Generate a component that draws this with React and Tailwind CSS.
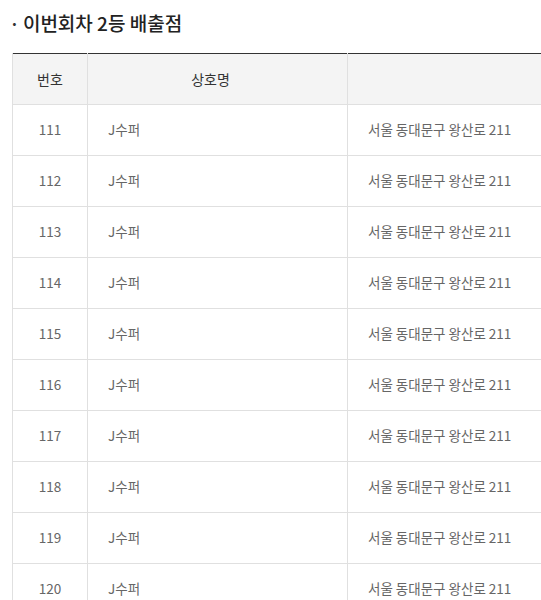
import React from 'react'

const stores = Array.from({ length: 10 }, (_, i) => ({
  no: 111 + i,
  name: 'J수퍼',
  addr: '서울 동대문구 왕산로 211',
}))

export default function App() {
  return (
    <div className="w-[541px] overflow-hidden bg-white pl-3 font-['Noto_Sans_CJK_KR','Noto_Sans',sans-serif]">
      {/* 제목 */}
      <h3 className="flex h-[53px] items-center pb-[6px] text-[19px] font-medium text-[#222]">
        <span className="ml-[-3px] mr-[3px] text-[#333]">·</span>
        이번회차 2등 배출점
      </h3>

      <table className="w-[560px] table-fixed border-collapse border-t border-t-[#333] text-[13.5px]">
        <colgroup>
          <col className="w-[75px]" />
          <col className="w-[260px]" />
          <col />
        </colgroup>
        <thead>
          <tr className="h-[51px] bg-[#f4f4f4] text-[14px] text-[#333]">
            <th className="border border-t-0 border-[#e0e0e0] font-normal">번호</th>
            <th className="border border-t-0 border-[#e0e0e0] pr-[14px] font-normal">상호명</th>
            <th className="border border-t-0 border-[#e0e0e0] font-normal"></th>
          </tr>
        </thead>
        <tbody className="text-[#666]">
          {stores.map((s) => (
            <tr key={s.no} className="h-[51px]">
              <td className="border border-[#e0e0e0] pb-[2px] text-center">{s.no}</td>
              <td className="border border-[#e0e0e0] pb-[2px] pl-5">{s.name}</td>
              <td className="border border-[#e0e0e0] pb-[2px] pl-5">{s.addr}</td>
            </tr>
          ))}
        </tbody>
      </table>
    </div>
  )
}
